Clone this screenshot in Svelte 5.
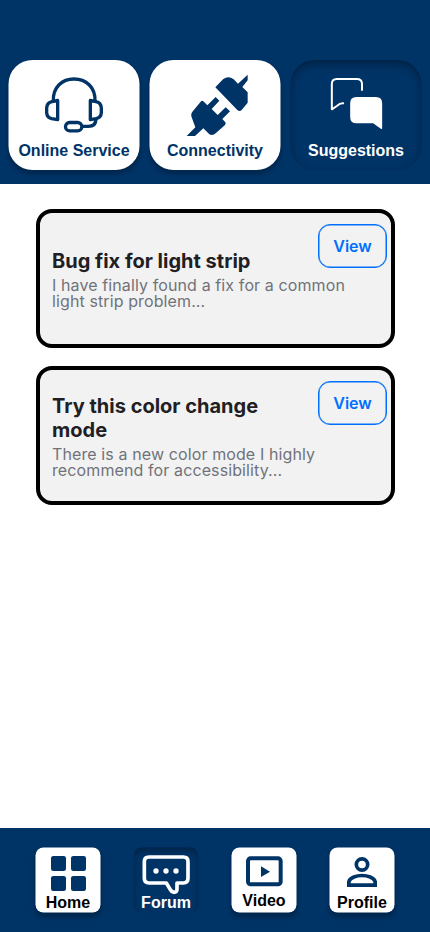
<script>
  const posts = [
    { title: 'Bug fix for light strip', text: 'I have finally found a fix for a common light strip problem...' },
    { title: 'Try this color change mode', text: 'There is a new color mode I highly recommend for accessibility...' }
  ];
</script>

<div class="screen">
  <header>
    <button class="tab">
      <svg viewBox="25.5 30 393 240" fill="none" stroke="#003366" stroke-width="10" stroke-linejoin="round">
        <path d="M160 154C158 111 187 87 222 87S287 111 285 154" />
        <path d="M173 151.500V209L155 206Q141 203 140 188V174Q141 158 156 155Z" />
        <path d="M271 151.500V209L288 206Q303 203 304 188V174Q303 158 288 155Z" />
        <rect x="196.500" y="217.500" width="49" height="25" rx="12.500" />
        <path d="M246 229H265Q288 229 288 207" />
      </svg>
      <span>Online Service</span>
    </button>
    <button class="tab">
      <svg viewBox="13.500 30 393 240" fill="#003366">
        <path d="M211 112L234 88Q250 75 266 88L279 101L308 74V91L292 111L308 127V158L290 180Q284 186 277 180Z" />
        <path d="M125 258L151 232L140 202Q136 192 144 183L167 155Q171 150 175 154L187 166L212 141L223 152L200 177L218 195L242 172L255 184L232 207L241 217Q244 221 240 225L212 250Q203 258 193 253L175 235L150 258Z" />
      </svg>
      <span>Connectivity</span>
    </button>
    <button class="tab active">
      <svg viewBox="15 30 393 240" fill="none" stroke="#fff" stroke-width="6" stroke-linecap="round" stroke-linejoin="round">
        <path d="M229.500 120V101Q229 87 214 87H154Q139 87 139 102V178L154 168Q164 159 173 160" />
        <path fill="#fff" stroke="none" d="M213 141H271Q290 141 290 160V234Q290 238 286 236L263 220H213Q194 220 194 201V160Q194 141 213 141Z" />
      </svg>
      <span>Suggestions</span>
    </button>
  </header>

  <main>
    {#each posts as post}
      <article>
        <div class="copy">
          <h2>{post.title}</h2>
          <p>{post.text}</p>
        </div>
        <button class="view">View</button>
      </article>
    {/each}
  </main>

  <nav>
    <button class="item">
      <svg viewBox="46.500 82.500 195 140" fill="#003366">
        <rect x="93" y="108" width="45" height="45" rx="7" />
        <rect x="153" y="108" width="45" height="45" rx="7" />
        <rect x="93" y="168" width="45" height="45" rx="7" />
        <rect x="153" y="168" width="45" height="45" rx="7" />
      </svg>
      <span>Home</span>
    </button>
    <button class="item active">
      <svg viewBox="40.500 82.500 195 140" fill="none" stroke="#fff" stroke-width="11" stroke-linejoin="round">
        <path d="M87 111H190Q204 111 204 125V175Q204 189 190 189H171V208Q171 217 161 217Q154 215 151 209L139 189H87Q73 189 73 175V125Q73 111 87 111Z" />
        <g fill="#fff" stroke="none">
          <circle cx="108" cy="153" r="8" /><circle cx="138" cy="153" r="8" /><circle cx="168" cy="153" r="8" />
        </g>
      </svg>
      <span>Forum</span>
    </button>
    <button class="item video">
      <svg viewBox="34.500 82.500 195 140" fill="none" stroke="#003366" stroke-width="12">
        <rect x="84" y="115" width="98" height="78" rx="8" />
        <path fill="#003366" stroke="none" d="M123 139V171L150 155Z" />
      </svg>
      <span>Video</span>
    </button>
    <button class="item">
      <svg viewBox="28.500 82.500 195 140" fill="none" stroke="#003366" stroke-width="11">
        <circle cx="126" cy="133.500" r="17" />
        <path d="M86.500 195.500V185C90 172 110 166.500 126 166.500S162 172 165.500 185V195.500Z" />
      </svg>
      <span>Profile</span>
    </button>
  </nav>
</div>

<style>
  :global(body) { margin: 0; background: #fff; }
  .screen { width: 430px; height: 932px; display: flex; flex-direction: column; background: #fff; }
  button { font: inherit; border: 0; margin: 0; padding: 0; box-sizing: border-box; }
  svg { display: block; }
  header {
    box-sizing: border-box; height: 184px; flex: none; padding: 60px 9px 0;
    display: flex; gap: 10px; align-items: flex-start; background: #003366;
  }
  .tab {
    width: 131px; height: 110px; flex: none; border-radius: 24px; background: #fff; color: #003366;
    display: flex; flex-direction: column; align-items: center; justify-content: flex-start;
    font: bold 16px/20px "Liberation Sans", Arial, sans-serif;
    box-shadow: 0 4px 4px rgba(0, 0, 0, .25);
    white-space: nowrap;
    transform: translateX(-.5px);
  }
  .tab svg { width: 131px; height: 80px; }
  .tab span { margin-top: 1px; }
  .tab.active { background: #003366; color: #fff; box-shadow: inset 0 4px 8px rgba(0, 0, 0, .35); }
  main { flex: 1; padding: 25px 35px 0 36px; display: flex; flex-direction: column; gap: 18px; }
  article {
    box-sizing: border-box; height: 139px; border: 4px solid #000; border-radius: 16px; background: #f2f2f2;
    padding: 1px 4px 0 12px; display: flex; align-items: center; justify-content: space-between;
    font-family: Inter, sans-serif;
  }
  .copy { width: 266px; flex: none; }
  h2 { margin: 0 0 4px; width: 240px; font-size: 20px; line-height: 24px; font-weight: 700; color: #1f2024; }
  p { margin: 0; width: 300px; font-size: 16px; line-height: 16px; letter-spacing: .11px; color: #71727a; }
  .view {
    align-self: flex-start; margin-top: 10px; width: 69px; height: 44px; flex: none;
    border: 1px solid #006ffd; border-radius: 12px; background: transparent; color: #006ffd;
    box-shadow: inset 0 0 0 .5px #006ffd;
    font: 600 16px/20px Inter, sans-serif;
  }
  nav {
    box-sizing: border-box; height: 104px; flex: none; padding: 20px 35px 0 36px;
    display: flex; justify-content: space-between; align-items: flex-start; background: #003366;
  }
  .item {
    width: 65px; height: 65px; border-radius: 8px; background: #fff; color: #000;
    display: flex; flex-direction: column; align-items: center; justify-content: flex-start;
    font: bold 16px/16px "Liberation Sans", Arial, sans-serif;
    box-shadow: 0 4px 4px rgba(0, 0, 0, .25);
    transform: translate(-.5px, -.5px);
  }
  .item svg { width: 65px; height: 46.667px; flex: none; }
  .item.active { background: #003366; color: #fff; box-shadow: inset 0 4px 6px rgba(0, 0, 0, .3); }
  .item.video span { margin-top: -2px; }
</style>
